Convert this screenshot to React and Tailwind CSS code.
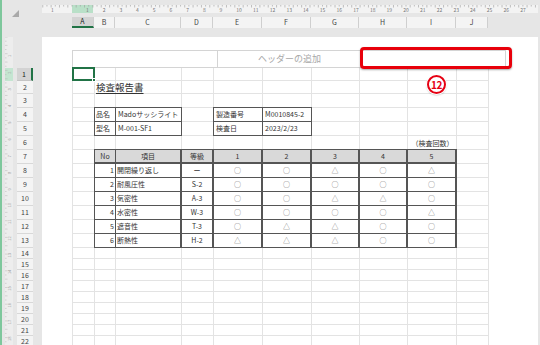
import React from "react";

const COL_W = ["w-[22px]", "w-[21px]", "w-[66px]", "w-[32px]", "w-[49px]", "w-[49px]", "w-[48px]", "w-[48px]", "w-[49px]", "w-[32px]"];
const LETTERS = ["A", "B", "C", "D", "E", "F", "G", "H", "I", "J"];
const ROWS = Array.from({ length: 22 }, (_, i) => i + 1);
const rowH = (n) => (n <= 2 ? "h-[13px]" : n <= 13 ? "h-[14px]" : "h-[11px]");

const GRID =
  "grid grid-cols-[22px_21px_66px_32px_49px_49px_48px_48px_49px_32px] grid-rows-[13px_13px_repeat(11,14px)_repeat(9,11px)]";

const items = [
  ["1", "開閉繰り返し", "ー", ["○", "○", "△", "○", "△"]],
  ["2", "耐風圧性", "S-2", ["○", "○", "○", "○", "○"]],
  ["3", "気密性", "A-3", ["○", "○", "△", "△", "○"]],
  ["4", "水密性", "W-3", ["○", "○", "○", "○", "△"]],
  ["5", "遮音性", "T-3", ["○", "△", "△", "○", "○"]],
  ["6", "断熱性", "H-2", ["△", "△", "△", "○", "○"]],
];

function Ruler() {
  const ticks = Array.from({ length: 120 }, (_, i) => 30 + (i - 7) * 4.175);
  return (
    <svg width="496" height="8">
      <rect width="496" height="8" fill="#f3f3f3" />
      <rect x="30" width="21" height="8" fill="#b9e0c8" />
      {ticks.map((x, i) => (
        <line key={i} x1={x} x2={x} y1="0" y2={i % 2 ? 1.5 : 2.5} stroke="#9a9a9a" strokeWidth="0.6" />
      ))}
      <text x="9" y="7" fontSize="5" fill="#777">1</text>
      {Array.from({ length: 27 }, (_, i) => (
        <text key={i} x={44 + i * 16.7} y="7" fontSize="5" fill="#777">
          {i + 1}
        </text>
      ))}
    </svg>
  );
}

function VRuler() {
  const ticks = Array.from({ length: 75 }, (_, i) => i * 4.175);
  return (
    <svg width="8" height="310">
      <rect width="8" height="310" fill="#ededed" />
      <rect y="31" width="8" height="13" fill="#c4e5d1" />
      {ticks.map((y, i) => (
        <line key={i} y1={y} y2={y} x1="0" x2={i % 2 ? 1.5 : 2.5} stroke="#b4b4b4" strokeWidth="0.5" />
      ))}
      {Array.from({ length: 18 }, (_, i) => (
        <text key={i} x="6" y={20 + i * 16.7} fontSize="4" fill="#a0a0a0" transform={`rotate(-90 6 ${20 + i * 16.7})`}>
          {i + 1}
        </text>
      ))}
    </svg>
  );
}

function Cell({ className, children }) {
  return <div className={"flex items-center overflow-hidden whitespace-nowrap text-[7px] leading-none text-[#333] " + className}>{children}</div>;
}

export default function App() {
  return (
    <div className="w-[540px] h-[345px] overflow-hidden bg-[#e6e6e6] flex font-['Noto_Sans_CJK_JP',sans-serif]">
      <div className="w-[2px] shrink-0 bg-[#7ec79c]" />
      <div className="flex-1 flex flex-col min-w-0">
        {/* ruler + column headers */}
        <div className="flex h-[37px] shrink-0">
          <div className="w-[40px] shrink-0">
            <svg width="7" height="7" className="ml-[10px] mt-[10px]">
              <polygon points="7,0 7,7 0,7" fill="#a9a9a9" />
            </svg>
          </div>
          <div className="flex-1 flex flex-col">
            <div className="mt-[5px] h-[8px]">
              <Ruler />
            </div>
            <div className="mt-[4px] ml-[30px] flex h-[11px]">
              {LETTERS.map((l, i) => (
                <div
                  key={l}
                  className={
                    COL_W[i] +
                    " flex items-center justify-center text-[7px] leading-none border-r border-[#cfcfcf] " +
                    (i === 0 ? "bg-[#d3d3d3] border-b-2 border-b-[#217346] text-[#222]" : "bg-[#f4f4f4] text-[#444]")
                  }
                >
                  {l}
                </div>
              ))}
            </div>
          </div>
        </div>

        <div className="flex flex-1 min-h-0">
          {/* left ruler + row headers */}
          <div className="w-[40px] shrink-0 flex">
            <div className="ml-[3px] w-[8px]">
              <VRuler />
            </div>
            <div className="ml-[4px] w-[16px] pt-[31px] flex flex-col">
              {ROWS.map((n) => (
                <div
                  key={n}
                  className={
                    rowH(n) +
                    " shrink-0 flex items-center justify-center text-[7px] leading-none border-b " +
                    (n === 1
                      ? "bg-[#d3d3d3] border-[#c4c4c4] border-r-2 border-r-[#217346] text-[#222]"
                      : "bg-[#f4f4f4] border-[#d8d8d8] text-[#444]")
                  }
                >
                  {n}
                </div>
              ))}
            </div>
          </div>

          {/* page */}
          <div className="flex-1 bg-white mr-[2px] pl-[30px] pt-[13px] flex flex-col">
            <div className="relative flex w-[434px] h-[18px] shrink-0 border border-[#d4d4d4]">
              <div className="w-[145px] border-r border-[#d4d4d4]" />
              <div className="w-[144px] border-r border-[#d4d4d4] flex items-center justify-center text-[9px] text-[#a8a8a8]">
                ヘッダーの追加
              </div>
              <div className="flex-1" />
              <div className="absolute left-[287px] -top-[4px] w-[152px] h-[22px] rounded-[4px] border-[3px] border-[#e8000b] shadow-[0_1px_2px_rgba(0,0,0,0.35)]" />
              <div className="absolute z-10 left-[354px] top-[24px] w-[19px] h-[19px] rounded-full bg-white border-2 border-[#e60012] ring-1 ring-white shadow-[0_1px_2px_rgba(0,0,0,0.4)] flex items-center justify-center text-[10px] font-bold leading-none tracking-[-0.5px] text-[#e60012]">
                12
              </div>
            </div>

            <div className="grid w-[417px] border-l border-[#e3e3e3]">
              {/* gridlines */}
              <div className={GRID + " col-start-1 row-start-1"}>
                {Array.from({ length: 220 }, (_, i) => (
                  <div key={i} className="border-r border-b border-[#e3e3e3]" />
                ))}
              </div>

              {/* content */}
              <div className={GRID + " col-start-1 row-start-1"}>
                <div className="col-start-1 row-start-1 relative -ml-px -mt-px border-2 border-[#217346]">
                  <div className="absolute -right-[3px] -bottom-[3px] w-[4px] h-[4px] bg-[#217346] border border-white" />
                </div>

                <div className="col-start-2 col-end-6 row-start-2 flex items-center pl-[1px] text-[9.5px] leading-none text-[#333] underline underline-offset-[2px]">
                  検査報告書
                </div>

                <div className="col-start-2 col-end-4 row-start-4 row-end-6 -ml-px -mt-px grid grid-cols-[21px_66px] grid-rows-[14px_14px] border-t border-l border-[#555]">
                  <Cell className="border-r border-b border-[#555] pl-[1px]">品名</Cell>
                  <Cell className="border-r border-b border-[#555] pl-[2px]">Madoサッシライト</Cell>
                  <Cell className="border-r border-b border-[#555] pl-[1px]">型名</Cell>
                  <Cell className="border-r border-b border-[#555] pl-[2px]">M-001-SF1</Cell>
                </div>

                <div className="col-start-5 col-end-7 row-start-4 row-end-6 -ml-px -mt-px grid grid-cols-[49px_49px] grid-rows-[14px_14px] border-t border-l border-[#555]">
                  <Cell className="border-r border-b border-[#555] pl-[2px]">製造番号</Cell>
                  <Cell className="border-r border-b border-[#555] pl-[2px]">M0010845-2</Cell>
                  <Cell className="border-r border-b border-[#555] pl-[2px]">検査日</Cell>
                  <Cell className="border-r border-b border-[#555] pl-[2px]">2023/2/23</Cell>
                </div>

                <Cell className="col-start-9 row-start-6 justify-center">（検査回数）</Cell>

                <div className="col-start-2 col-end-10 row-start-7 row-end-14 -ml-px -mt-px grid grid-cols-[21px_66px_32px_49px_49px_48px_48px_49px] grid-rows-[repeat(7,14px)] border-t border-l border-[#555]">
                  {["No", "項目", "等級", "1", "2", "3", "4", "5"].map((h, c) => (
                    <Cell
                      key={h}
                      className={
                        "justify-center bg-[#d9d9d9] border-b-2 border-[#555] " + (c === 0 ? "border-r" : "border-r-2")
                      }
                    >
                      {h}
                    </Cell>
                  ))}
                  {items.map(([no, name, grade, vals]) => (
                    <React.Fragment key={no}>
                      <Cell className="justify-end pr-[1px] border-r border-b border-[#555]">{no}</Cell>
                      <Cell className="pl-[1px] border-r-2 border-b border-[#555]">{name}</Cell>
                      <Cell className="justify-center border-r-2 border-b border-[#555]">{grade}</Cell>
                      {vals.map((v, j) => (
                        <Cell key={j} className="justify-center text-[#666] border-r-2 border-b border-[#555]">
                          {v}
                        </Cell>
                      ))}
                    </React.Fragment>
                  ))}
                </div>
              </div>
            </div>
          </div>
        </div>
      </div>
    </div>
  );
}
